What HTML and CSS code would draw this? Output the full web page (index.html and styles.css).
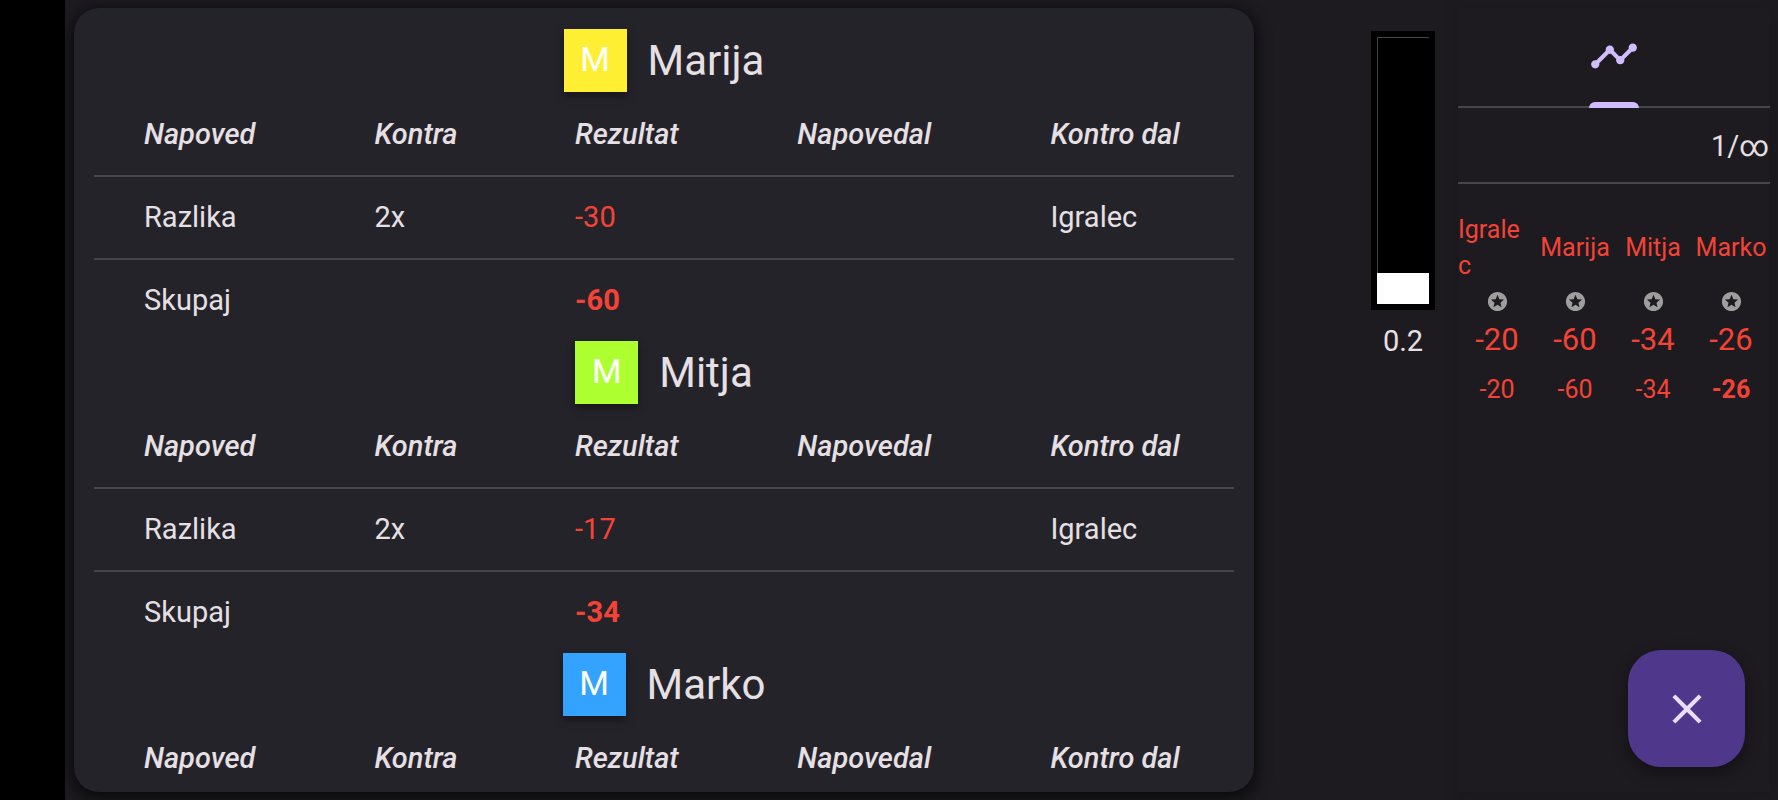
FILE: index.html
```html
<!DOCTYPE html>
<html lang="sl">
<head>
<meta charset="utf-8">
<title>Rezultati</title>
<link rel="stylesheet" href="styles.css">
</head>
<body>
<svg class="sprite" aria-hidden="true">
  <symbol id="star" viewBox="0 0 24 24">
    <path d="M11.99 2C6.47 2 2 6.48 2 12s4.47 10 9.99 10C17.52 22 22 17.52 22 12S17.52 2 11.99 2zm4.24 16L12 15.45 7.77 18l1.12-4.81-3.73-3.23 4.92-.42L12 5l1.92 4.53 4.92.42-3.73 3.23L16.23 18z"/>
  </symbol>
</svg>
<div class="game">
  <main class="results">
    <section>
      <h2 class="player"><span class="avatar yellow">M</span>Marija</h2>
      <table class="result-table">
        <thead>
          <tr><th>Napoved</th><th>Kontra</th><th>Rezultat</th><th>Napovedal</th><th>Kontro dal</th></tr>
        </thead>
        <tbody>
          <tr><td>Razlika</td><td>2x</td><td class="minus">-30</td><td></td><td>Igralec</td></tr>
          <tr><td>Skupaj</td><td></td><td class="minus total">-60</td><td></td><td></td></tr>
        </tbody>
      </table>
    </section>
    <section>
      <h2 class="player"><span class="avatar green">M</span>Mitja</h2>
      <table class="result-table">
        <thead>
          <tr><th>Napoved</th><th>Kontra</th><th>Rezultat</th><th>Napovedal</th><th>Kontro dal</th></tr>
        </thead>
        <tbody>
          <tr><td>Razlika</td><td>2x</td><td class="minus">-17</td><td></td><td>Igralec</td></tr>
          <tr><td>Skupaj</td><td></td><td class="minus total">-34</td><td></td><td></td></tr>
        </tbody>
      </table>
    </section>
    <section>
      <h2 class="player"><span class="avatar blue">M</span>Marko</h2>
      <table class="result-table">
        <thead>
          <tr><th>Napoved</th><th>Kontra</th><th>Rezultat</th><th>Napovedal</th><th>Kontro dal</th></tr>
        </thead>
      </table>
    </section>
  </main>

  <div class="evaluation">
    <div class="eval-box">
      <div class="eval-bar">
        <div class="eval-track"><div class="eval-fill" style="height: 11.5%"></div></div>
      </div>
      <div class="eval-value">0.2</div>
    </div>
  </div>

  <aside class="side">
    <nav class="tabs">
      <button class="tab" type="button" aria-label="Točke">
        <svg class="icon" viewBox="0 0 24 24"><path d="M23 8c0 1.1-.9 2-2 2-.18 0-.35-.02-.51-.07l-3.56 3.55c.05.16.07.34.07.52 0 1.1-.9 2-2 2s-2-.9-2-2c0-.18.02-.36.07-.52l-2.55-2.55c-.16.05-.34.07-.52.07s-.36-.02-.52-.07l-4.55 4.56c.05.16.07.33.07.51 0 1.1-.9 2-2 2s-2-.9-2-2 .9-2 2-2c.18 0 .35.02.51.07l4.56-4.55C8.02 9.36 8 9.18 8 9c0-1.1.9-2 2-2s2 .9 2 2c0 .18-.02.36-.07.52l2.55 2.55c.16-.05.34-.07.52-.07s.36.02.52.07l3.55-3.56C19.02 8.35 19 8.18 19 8c0-1.1.9-2 2-2s2 .9 2 2z"/></svg>
      </button>
    </nav>
    <div class="round">1/∞</div>
    <table class="scores">
      <thead>
        <tr class="names"><th class="wrapped">Igrale<br>c</th><th>Marija</th><th>Mitja</th><th>Marko</th></tr>
      </thead>
      <tbody>
        <tr class="stars">
          <td><svg><use href="#star"/></svg></td>
          <td><svg><use href="#star"/></svg></td>
          <td><svg><use href="#star"/></svg></td>
          <td><svg><use href="#star"/></svg></td>
        </tr>
        <tr class="sums"><td>-20</td><td>-60</td><td>-34</td><td>-26</td></tr>
        <tr class="games"><td>-20</td><td>-60</td><td>-34</td><td class="total">-26</td></tr>
      </tbody>
    </table>
  </aside>
</div>

<button class="fab" type="button" aria-label="Zapri">
  <svg class="icon" viewBox="0 0 24 24"><path d="M19 6.41L17.59 5 12 10.59 6.41 5 5 6.41 10.59 12 5 17.59 6.41 19 12 13.41 17.59 19 19 17.59 13.41 12z"/></svg>
</button>
</body>
</html>
```
FILE: styles.css
```css
* {
  box-sizing: border-box;
}

body {
  margin: 0;
  background-color: #1d1b20;
  color: #e6e0e5;
  font-family: Roboto, sans-serif;
  font-size: 29px;
  line-height: 40px;
}

table {
  width: 100%;
  border-spacing: 0;
  table-layout: fixed;
}

th, td {
  padding: 0;
}

button {
  border: none;
  padding: 0;
  cursor: pointer;
}

.sprite {
  display: none;
}

.icon {
  display: block;
  width: 50px;
  height: 50px;
  fill: currentColor;
}

.game {
  display: grid;
  grid-template-columns: minmax(0, 1fr) 180px 312px;
  column-gap: 12px;
  height: 100vh;
  padding: 8px 8px 8px 9px;
  border-left: 65px solid #000;
  overflow: hidden;
}

/* player results */

.results {
  padding: 21px 20px;
  border-radius: 25px;
  background-color: #25232a;
  box-shadow: 0 4px 14px 4px rgba(0, 0, 0, 0.6);
  overflow: hidden;
}

.player {
  display: flex;
  align-items: center;
  justify-content: center;
  gap: 21px;
  height: 63px;
  margin: 0;
  font-size: 42px;
  font-weight: normal;
}

.avatar {
  width: 63px;
  height: 63px;
  color: #fff;
  font-size: 34px;
  line-height: 60px;
  text-align: center;
  box-shadow: 0 4px 8px rgba(0, 0, 0, 0.4);
}

.yellow {
  background-color: #ffef33;
}

.green {
  background-color: #adff2f;
}

.blue {
  background-color: #33a3ff;
}

.result-table th, .result-table td {
  height: 83px;
  text-align: left;
  border-bottom: 2px solid #47454c;
}

.result-table td {
  padding-bottom: 2px;
}

.result-table th {
  height: 85px;
  font-weight: 500;
  font-style: italic;
  width: 17.6%;
}

.result-table tbody tr:last-child td {
  height: 81px;
  border-bottom: none;
}

.result-table th:first-child {
  width: 24.6%;
}

.result-table th:nth-child(3) {
  width: 19.5%;
}

.result-table th:nth-child(4) {
  width: 22.2%;
}

.result-table th:last-child {
  width: 16.1%;
}

.result-table th:first-child, .result-table td:first-child {
  padding-left: 50px;
}

.minus {
  color: #f44336;
}

.total {
  font-weight: bold;
}

/* evaluation bar */

.evaluation {
  display: flex;
  justify-content: flex-end;
  padding: 23px 11px 0 0;
}

.eval-box {
  width: 64px;
  text-align: center;
}

.eval-bar {
  height: 279px;
  padding: 6px;
  background-color: #000;
}

.eval-track {
  display: flex;
  align-items: flex-end;
  height: 100%;
  box-shadow: inset 1px 1px #444;
}

.eval-fill {
  width: 100%;
  background-color: #fff;
}

.eval-value {
  margin-top: 11px;
}

/* score sheet */

.side {
  box-shadow: 0 4px 12px 2px rgba(20, 20, 18, 0.4);
}

.tabs {
  display: flex;
  justify-content: center;
  height: 100px;
  border-bottom: 2px solid #47454c;
}

.tab {
  display: flex;
  flex-direction: column;
  align-items: center;
  height: 100px;
  padding-top: 23px;
  background: none;
  color: #d0bcff;
}

.tab::after {
  content: "";
  width: 50px;
  height: 6px;
  margin-top: auto;
  border-radius: 6px 6px 0 0;
  background-color: currentColor;
}

.round {
  height: 76px;
  padding: 18px 1px;
  border-bottom: 2px solid #47454c;
  text-align: right;
}

.scores {
  margin-top: 26px;
  color: #f44336;
  font-size: 25px;
  line-height: 36px;
  text-align: center;
}

.names th {
  height: 76px;
  font-weight: normal;
}

.names .wrapped {
  text-align: left;
}

.stars td {
  height: 30px;
}

.stars svg {
  display: block;
  width: 23px;
  height: 23px;
  margin: 0 auto;
  fill: #9e9e9e;
}

.sums td {
  height: 48px;
  font-size: 31px;
}

.games td {
  height: 52px;
}

/* close button */

.fab {
  position: fixed;
  right: 33px;
  bottom: 33px;
  display: flex;
  align-items: center;
  justify-content: center;
  width: 117px;
  height: 117px;
  border-radius: 33px;
  background-color: #4f378b;
  color: #eaddff;
  box-shadow: 0 6px 16px rgba(0, 0, 0, 0.4);
}
```
